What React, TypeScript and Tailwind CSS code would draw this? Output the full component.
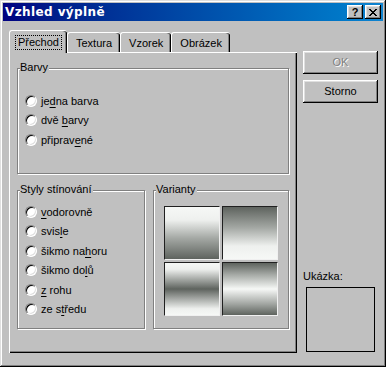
import type { ReactNode } from "react";

const raised =
  "shadow-[inset_-1px_-1px_0_#000,inset_1px_1px_0_#fff,inset_-2px_-2px_0_#808080,inset_2px_2px_0_#dfdfdf]";

function Radio({ children }: { children: ReactNode }) {
  return (
    <div className="flex h-[19.5px] items-center gap-[4px]">
      <span className="h-[12px] w-[12px] shrink-0 rounded-full border border-t-[#808080] border-l-[#808080] border-r-white border-b-white bg-white shadow-[inset_1px_1px_0_#000,inset_-1px_-1px_0_#dfdfdf]" />
      <span>{children}</span>
    </div>
  );
}

function Group({
  label,
  className,
  children,
}: {
  label: string;
  className: string;
  children: ReactNode;
}) {
  return (
    <div
      className={`relative border border-[#808080] shadow-[inset_1px_1px_0_#fff,1px_1px_0_#fff] ${className}`}
    >
      <span className="absolute left-[2px] top-[-8px] bg-[#c0c0c0] pr-[1px] leading-[13px]">
        {label}
      </span>
      {children}
    </div>
  );
}

function Key({ children }: { children: ReactNode }) {
  return <span className="underline underline-offset-[2px]">{children}</span>;
}

function Tab({ label, active }: { label: string; active?: boolean }) {
  if (active) {
    return (
      <div className="relative z-10 -mb-px flex h-[23px] w-[58px] items-center justify-center rounded-t-[3px] border-t border-l border-white bg-[#c0c0c0] shadow-[inset_-1px_0_0_#000,inset_-2px_0_0_#808080]">
        <span className="border border-dotted border-black px-[2px] leading-[13px]">{label}</span>
      </div>
    );
  }
  return (
    <div className="flex h-[20px] items-center justify-center rounded-t-[3px] border-t border-l border-white bg-[#c0c0c0] px-[8px] pt-[2px] shadow-[inset_-1px_0_0_#000,inset_-2px_0_0_#808080]">
      {label}
    </div>
  );
}

export default function App() {
  return (
    <div
      className="flex h-[367px] w-[386px] flex-col bg-[#c0c0c0] p-[3px] text-[11px] text-black shadow-[inset_-1px_-1px_0_#000,inset_1px_1px_0_#dfdfdf,inset_-2px_-2px_0_#808080,inset_2px_2px_0_#fff]"
      style={{ fontFamily: '"Liberation Sans", Arial, sans-serif' }}
    >
      <div className="flex h-[18px] items-center bg-gradient-to-r from-[#000080] to-[#1084d0] pl-[2px] pr-[2px]">
        <span className="flex-1 font-['DejaVu_Sans',sans-serif] text-[12px] font-bold leading-[16px] tracking-[0.4px] text-white">
          Vzhled výplně
        </span>
        <div className={`flex h-[14px] w-[16px] items-center justify-center bg-[#c0c0c0] text-[11px] font-bold ${raised}`}>
          ?
        </div>
        <div className={`ml-[2px] flex h-[14px] w-[16px] items-center justify-center bg-[#c0c0c0] ${raised}`}>
          <svg width="8" height="7" viewBox="0 0 8 7">
            <path d="M0 0h2v1h1v1h2V1h1V0h2v1H7v1H6v1H5v1h1v1h1v1h1v1H6V6H5V5H3v1H2v1H0V6h1V5h1V4h1V3H2V2H1V1H0z" fill="#000" />
          </svg>
        </div>
      </div>

      <div className="flex flex-1 pl-[6px]">
        <div className="flex flex-col pt-[9px]">
          <div className="flex h-[22px] items-end">
            <Tab label="Přechod" active />
            <Tab label="Textura" />
            <Tab label="Vzorek" />
            <Tab label="Obrázek" />
          </div>
          <div className="flex h-[301px] w-[288px] flex-col px-[8px] pt-[16px] shadow-[inset_1px_1px_0_#fff,inset_-1px_-1px_0_#000,inset_-2px_-2px_0_#808080]">
            <Group label="Barvy" className="h-[106px] pl-[7px] pt-[22px]">
              <Radio>
                je<Key>d</Key>na barva
              </Radio>
              <Radio>
                dvě <Key>b</Key>arvy
              </Radio>
              <Radio>
                připrav<Key>e</Key>né
              </Radio>
            </Group>

            <div className="mt-[16px] flex gap-[8px]">
              <Group label="Styly stínování" className="h-[139px] w-[128px] pl-[7px] pt-[11px]">
                <Radio>
                  <Key>v</Key>odorovně
                </Radio>
                <Radio>
                  svis<Key>l</Key>e
                </Radio>
                <Radio>
                  šikmo na<Key>h</Key>oru
                </Radio>
                <Radio>
                  šikmo do<Key>l</Key>ů
                </Radio>
                <Radio>
                  <Key>z</Key> rohu
                </Radio>
                <Radio>
                  ze s<Key>t</Key>ředu
                </Radio>
              </Group>

              <Group label="Varianty" className="h-[139px] w-[136px] pl-[10px] pt-[15px]">
                <div className="grid grid-cols-[56px_56px] grid-rows-[54px_54px] gap-[2px]">
                  <div className="border border-t-[#202020] border-l-[#202020] border-r-[#f0f0f0] border-b-[#f0f0f0] bg-[linear-gradient(to_bottom,#f6f8f6_0%,#eef0ee_25%,#a4a8a4_60%,#5e635e_100%)]" />
                  <div className="border border-t-[#202020] border-l-[#202020] border-r-[#f0f0f0] border-b-[#f0f0f0] bg-[linear-gradient(to_bottom,#5e635e_0%,#a4a8a4_40%,#eef0ee_75%,#f6f8f6_100%)]" />
                  <div className="border border-t-[#202020] border-l-[#202020] border-r-[#f0f0f0] border-b-[#f0f0f0] bg-[linear-gradient(to_bottom,#f6f8f6_0%,#eef0ee_12%,#5e635e_50%,#eef0ee_88%,#f6f8f6_100%)]" />
                  <div className="border border-t-[#202020] border-l-[#202020] border-r-[#f0f0f0] border-b-[#f0f0f0] bg-[linear-gradient(to_bottom,#5e635e_0%,#a4a8a4_22%,#f6f8f6_50%,#a4a8a4_78%,#5e635e_100%)]" />
                </div>
              </Group>
            </div>
          </div>
        </div>

        <div className="ml-[6px] flex w-[75px] flex-col pt-[30px]">
          <div className={`flex h-[23px] items-center justify-center text-[#808080] [text-shadow:1px_1px_0_#fff] ${raised}`}>
            OK
          </div>
          <div className={`mt-[6px] flex h-[23px] items-center justify-center ${raised}`}>Storno</div>
          <div className="mt-[167px] leading-[13px]">Ukázka:</div>
          <div className="ml-[3px] mt-[4px] h-[65px] w-[69px] border border-black" />
        </div>
      </div>
    </div>
  );
}
